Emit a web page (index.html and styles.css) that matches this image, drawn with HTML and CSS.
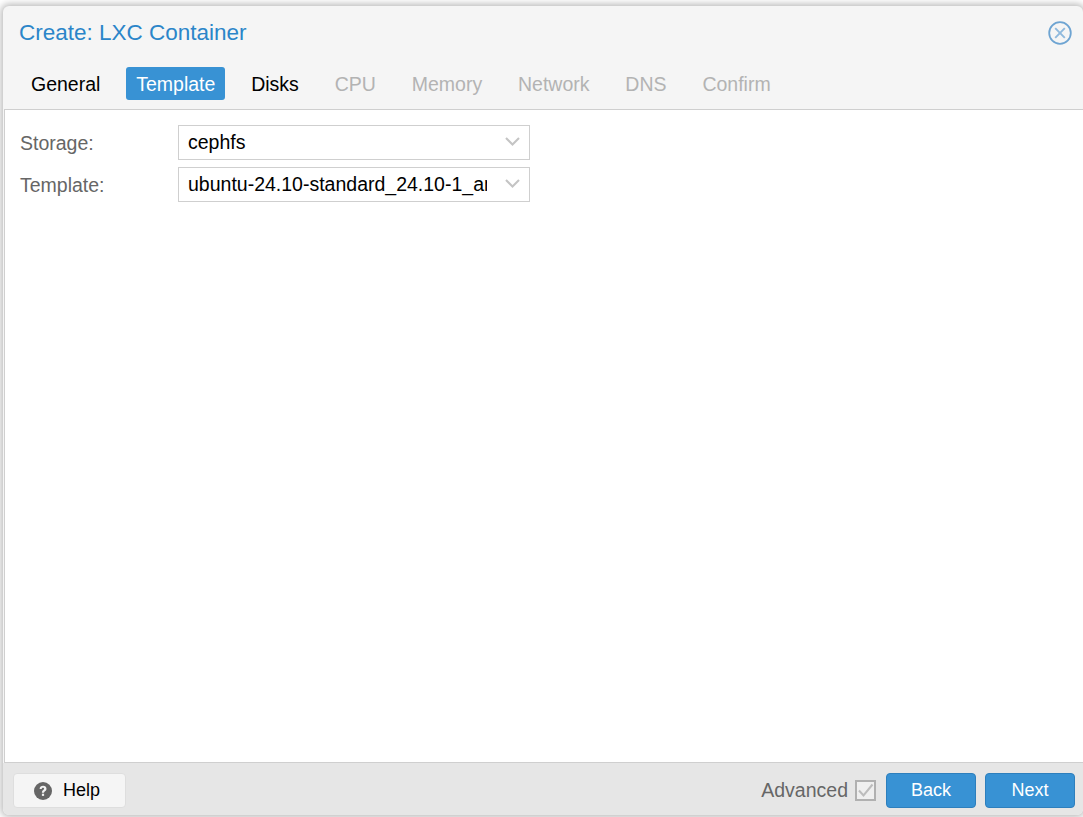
FILE: index.html
```html
<!DOCTYPE html>
<html lang="en">
<head>
<meta charset="utf-8">
<title>Create: LXC Container</title>
<link rel="stylesheet" href="styles.css">
</head>
<body>
<div class="window">
  <header class="head">
    <div class="title-row">
      <h1 class="title">Create: LXC Container</h1>
      <svg class="close" viewBox="0 0 24 24" width="24" height="24" aria-hidden="true">
        <circle cx="12" cy="12" r="10.8" fill="none" stroke="#6ea4d2" stroke-width="1.8"/>
        <path d="M7.2 7.2 16.8 16.8M16.8 7.2 7.2 16.8" fill="none" stroke="#8fb9dd" stroke-width="1.9"/>
      </svg>
    </div>
    <nav class="tabs">
      <span class="tab">General</span>
      <span class="tab active">Template</span>
      <span class="tab">Disks</span>
      <span class="tab off">CPU</span>
      <span class="tab off">Memory</span>
      <span class="tab off">Network</span>
      <span class="tab off">DNS</span>
      <span class="tab off">Confirm</span>
    </nav>
  </header>
  <main class="content">
    <div class="field">
      <label class="label">Storage:</label>
      <div class="combo">
        <span class="value">cephfs</span>
        <svg class="chev" viewBox="0 0 15 9" width="15" height="9" aria-hidden="true"><path d="M1 1 7.5 7.5 14 1" fill="none" stroke="#c4c4c4" stroke-width="2.1"/></svg>
      </div>
    </div>
    <div class="field">
      <label class="label">Template:</label>
      <div class="combo">
        <span class="value">ubuntu-24.10-standard_24.10-1_amd64.tar.zst</span>
        <svg class="chev" viewBox="0 0 15 9" width="15" height="9" aria-hidden="true"><path d="M1 1 7.5 7.5 14 1" fill="none" stroke="#c4c4c4" stroke-width="2.1"/></svg>
      </div>
    </div>
  </main>
  <footer class="foot">
    <button class="btn help">
      <svg class="help-icon" viewBox="0 0 18 18" width="18" height="18" aria-hidden="true">
        <circle cx="9" cy="9" r="9" fill="#666"/>
        <path d="M5.6 6.9C5.7 5 7.2 3.8 9.1 3.8c2 0 3.4 1.2 3.4 2.9 0 2.5-2.4 2.3-2.4 4.1H7.9c0-2.8 2.2-2.7 2.2-4 0-.6-.4-1-1.1-1-.8 0-1.2.5-1.3 1.3z" fill="#f3f3f3"/>
        <rect x="7.9" y="11.7" width="2.2" height="2.2" fill="#f3f3f3"/>
      </svg>
      Help
    </button>
    <div class="spacer"></div>
    <span class="adv">Advanced</span>
    <svg class="check" viewBox="0 0 21 21" width="21" height="21" aria-hidden="true">
      <rect x="1" y="1" width="19" height="19" fill="#efefef" stroke="#b0b0b0" stroke-width="2"/>
      <path d="M4 10.5 8.5 15.5 17.5 4.5" fill="none" stroke="#bcbcbc" stroke-width="2"/>
    </svg>
    <button class="btn primary back">Back</button>
    <button class="btn primary">Next</button>
  </footer>
</div>
</body>
</html>
```
FILE: styles.css
```css
* { box-sizing: border-box; }
html, body { height: 100%; }
body {
  margin: 0;
  background: #fff;
  font-family: "Liberation Sans", Arial, sans-serif;
  overflow: hidden;
}
.window {
  height: 809px;
  margin: 6px 0 2px 3px;
  display: flex;
  flex-direction: column;
  background: #f5f5f5;
  border-radius: 6px;
  box-shadow: 0 0 7px 2px rgba(0, 0, 0, .28);
}
.head { height: 103px; flex: none; padding: 0 0 0 16px; }
.title-row {
  height: 52px;
  display: flex;
  align-items: center;
  justify-content: space-between;
}
.title {
  margin: 0;
  padding-top: 1px;
  font-size: 22.5px;
  font-weight: 400;
  color: #2b85c9;
}
.close { margin-right: 11px; margin-top: 2px; }
.tabs { display: flex; margin: 9px 0 0 2px; gap: 15.85px; }
.tab {
  height: 33px;
  padding: 1px 10px 0;
  display: flex;
  align-items: center;
  font-size: 19.5px;
  color: #000;
  border-radius: 3px;
}
.tab.active { background: #3892d4; color: #fff; }
.tab.off { color: #b3b3b3; }
.content {
  flex: 1;
  margin-left: 1px;
  background: #fff;
  border-top: 1px solid #cfcfcf;
  border-left: 1px solid #cfcfcf;
  border-bottom: 1px solid #cfcfcf;
  padding: 15px 0 0 15px;
}
.field { display: flex; align-items: center; height: 35px; margin-bottom: 7px; }
.label { width: 158px; flex: none; padding-top: 2px; font-size: 19.5px; color: #666; }
.combo {
  width: 352px;
  height: 35px;
  border: 1px solid #cfcfcf;
  background: #fff;
  display: flex;
  align-items: center;
  padding: 0 9px;
}
.value {
  width: 299px;
  flex: none;
  overflow: hidden;
  white-space: nowrap;
  font-size: 19.5px;
  color: #000;
}
.chev { margin: -2px 0 0 18px; flex: none; }
.foot {
  height: 52px;
  flex: none;
  background: #e6e6e6;
  display: flex;
  align-items: center;
  padding: 3px 8px 0 10px;
  border-radius: 0 0 6px 6px;
}
.btn {
  height: 35px;
  font: inherit;
  font-size: 18px;
  border-radius: 4px;
  cursor: pointer;
}
.help {
  width: 113px;
  display: flex;
  align-items: center;
  padding-right: 11px;
  justify-content: center;
  gap: 11px;
  background: #f5f5f5;
  border: 1px solid #dedede;
  color: #000;
}
.spacer { flex: 1; }
.adv { font-size: 19.5px; color: #666; }
.check { margin: 0 10px 0 7px; }
.primary {
  width: 90px;
  background: #3892d4;
  border: 1px solid #2d7fbd;
  color: #fff;
}
.back { margin-right: 9px; }
```
